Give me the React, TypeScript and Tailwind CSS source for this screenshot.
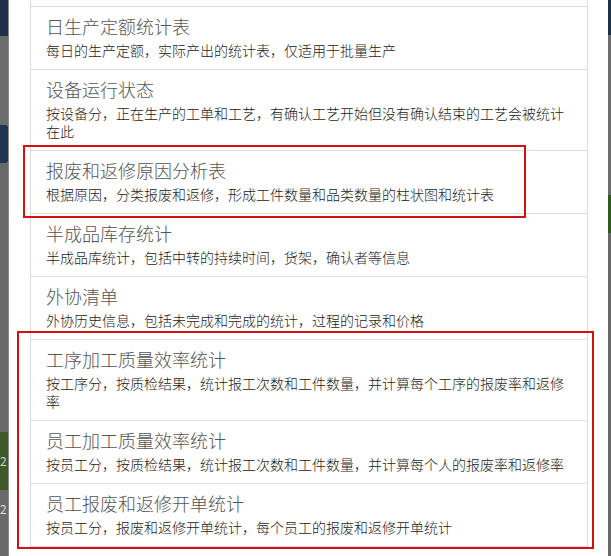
const reports = [
  { title: "日生产定额统计表", desc: "每日的生产定额，实际产出的统计表，仅适用于批量生产" },
  { title: "设备运行状态", desc: "按设备分，正在生产的工单和工艺，有确认工艺开始但没有确认结束的工艺会被统计在此" },
  { title: "报废和返修原因分析表", desc: "根据原因，分类报废和返修，形成工件数量和品类数量的柱状图和统计表" },
  { title: "半成品库存统计", desc: "半成品库统计，包括中转的持续时间，货架，确认者等信息" },
  { title: "外协清单", desc: "外协历史信息，包括未完成和完成的统计，过程的记录和价格" },
  { title: "工序加工质量效率统计", desc: "按工序分，按质检结果，统计报工次数和工件数量，并计算每个工序的报废率和返修率" },
  { title: "员工加工质量效率统计", desc: "按员工分，按质检结果，统计报工次数和工件数量，并计算每个人的报废率和返修率" },
  { title: "员工报废和返修开单统计", desc: "按员工分，报废和返修开单统计，每个员工的报废和返修开单统计" },
];

const App = () => {
  return (
    <div className="relative flex h-[556px] w-[611px] overflow-hidden bg-[#6a6a6a] font-['Noto_Sans_CJK_SC','Noto_Sans',sans-serif]">
      {/* dimmed page behind the modal, left edge */}
      <div className="flex w-[9px] flex-col border-r border-[#8a8a8a]">
        <div className="h-[36px] bg-[#1e3148]" />
        <div className="h-[89px] bg-[#6c6c6c]" />
        <div className="h-[38px] rounded-r-[3px] bg-[#1f3552]" />
        <div className="h-[269px] bg-[#696969]" />
        <div className="flex h-[58px] items-center overflow-hidden bg-[#3c5a2a] text-[12px] text-[#cfd8c8]">2</div>
        <div className="flex flex-1 items-start overflow-hidden bg-[#6a6a6a] pt-[10px] text-[12px] text-[#ddd]">2</div>
      </div>

      {/* modal body */}
      <div className="flex-1 bg-white pl-[21px] pr-[20px]">
        <div className="h-[6px] border-x border-[#ddd]" />
        <div className="border-b border-[#ddd]">
          {reports.map((item) => (
            <div key={item.title} className="border-x border-t border-[#ddd] px-[15px] pb-[10px] pt-[9px]">
              <div className="mb-[5px] text-[18px] font-light leading-[20px] text-[#555]">{item.title}</div>
              <div className="text-[14px] font-light leading-[18px] text-[#222]">{item.desc}</div>
            </div>
          ))}
        </div>
      </div>

      {/* dimmed page behind the modal, right edge */}
      <div className="flex w-[3px] flex-col">
        <div className="h-[35px] bg-[#1e3148]" />
        <div className="h-[160px] bg-[#6c6c6c]" />
        <div className="h-[38px] bg-[#2f5a1f]" />
        <div className="flex-1 bg-[#686868]" />
      </div>

      {/* annotation boxes */}
      <div className="absolute left-[23px] top-[145px] h-[73px] w-[503px] border-2 border-[#d41111]" />
      <div className="absolute left-[17px] top-[331px] h-[218px] w-[577px] border-2 border-[#d41111]" />
    </div>
  );
};

export default App;
